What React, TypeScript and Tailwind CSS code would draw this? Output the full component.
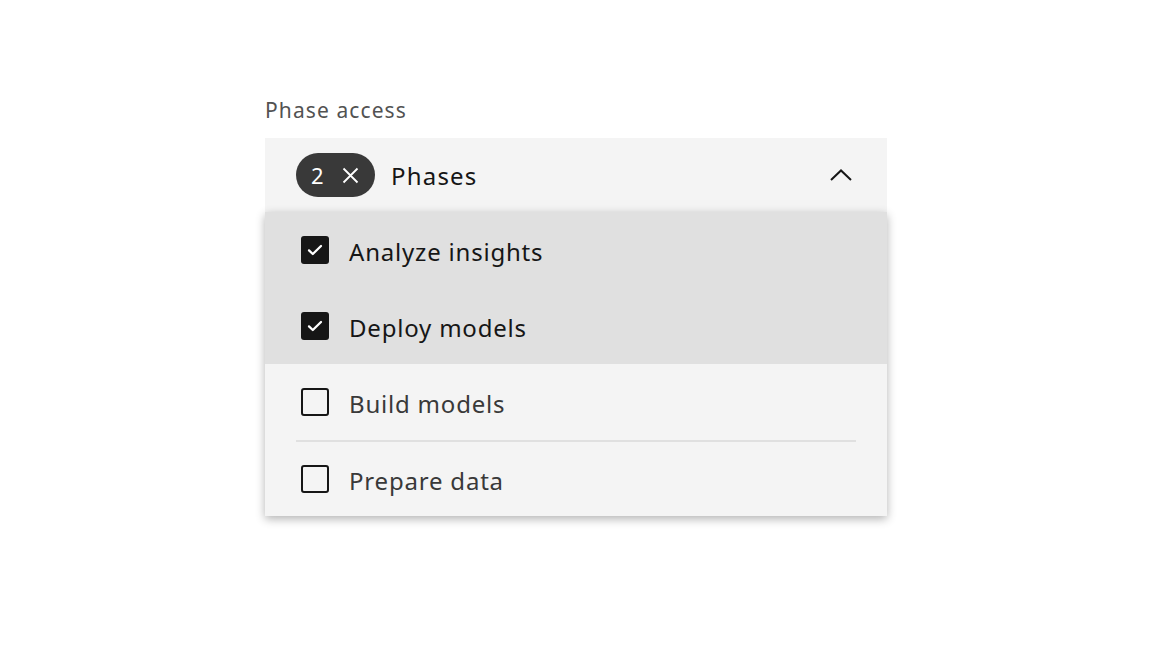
import React from "react";

const font = { fontFamily: '"Noto Sans", "Liberation Sans", sans-serif' };

type Option = { label: string; checked: boolean };

const options: Option[] = [
  { label: "Analyze insights", checked: true },
  { label: "Deploy models", checked: true },
  { label: "Build models", checked: false },
  { label: "Prepare data", checked: false },
];

function Checkbox({ checked }: { checked: boolean }) {
  if (checked) {
    return (
      <span className="flex h-[28px] w-[28px] shrink-0 items-center justify-center rounded-[3px] bg-[#161616]">
        <svg width="18" height="18" viewBox="0 0 18 18" fill="none">
          <path d="M3 9.4l3.8 3.6L15 5" stroke="#fff" strokeWidth="2.3" strokeLinecap="round" strokeLinejoin="round" />
        </svg>
      </span>
    );
  }
  return <span className="h-[28px] w-[28px] shrink-0 rounded-[3px] border-2 border-[#161616]" />;
}

export default function App() {
  return (
    <div className="h-[648px] w-full bg-white pt-[96px]" style={font}>
      <div className="ml-[265px] w-[622px]">
        <div className="mb-[14px] text-[21px] leading-[28px] tracking-[1.1px] text-[#525252]">Phase access</div>
        <div className="flex h-[74px] items-center bg-[#f4f4f4] pl-[31px] pr-[35px]">
          <span className="flex h-[44px] w-[79px] items-center rounded-full bg-[#393939] pl-[15px] text-white">
            <span className="text-[22px] leading-none">2</span>
            <svg className="ml-[18px]" width="17" height="17" viewBox="0 0 17 17" fill="none">
              <path d="M1.5 1.5l14 14M15.5 1.5l-14 14" stroke="#fff" strokeWidth="1.8" />
            </svg>
          </span>
          <span className="ml-[16px] flex-1 pt-[2px] text-[24px] tracking-[1.2px] text-[#161616]">Phases</span>
          <svg width="22" height="12" viewBox="0 0 22 12" fill="none">
            <path d="M1 11L11 1.5 21 11" stroke="#161616" strokeWidth="2" />
          </svg>
        </div>
        <div className="bg-[#f4f4f4] shadow-[0_3px_9px_rgba(0,0,0,0.3)]">
          {options.map((o, i) => {
            const prev = options[i - 1];
            const showBorder = i > 0 && !o.checked && prev && !prev.checked;
            return (
              <div key={o.label} className={o.checked ? "bg-[#e0e0e0]" : ""}>
                <div className="mx-[31px] flex h-[76px] items-center">
                  <div
                    className={
                      "flex h-full w-full items-center pl-[5px] " +
                      (showBorder ? "border-t-2 border-[#e0e0e0]" : "")
                    }
                  >
                    <Checkbox checked={o.checked} />
                    <span
                      className={
                        "ml-[20px] pt-[3px] text-[24px] tracking-[0.8px] " +
                        (o.checked ? "text-[#161616]" : "text-[#393939]")
                      }
                    >
                      {o.label}
                    </span>
                  </div>
                </div>
              </div>
            );
          })}
        </div>
      </div>
    </div>
  );
}
